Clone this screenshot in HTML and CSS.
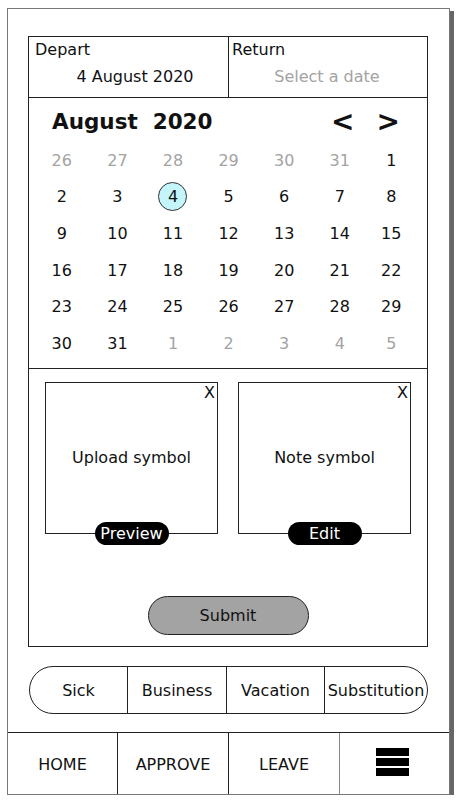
FILE: index.html
```html
<!DOCTYPE html>
<html lang="en">
<head>
    <meta charset="UTF-8">
    <meta name="viewport" content="width=device-width, initial-scale=1.0">
    <title>Leave request</title>
    <link rel="stylesheet" href="styles.css">
</head>
<body>
    <div class="frame">
        <div class="main">
            <div class="panel">
                <div class="dates">
                    <div class="date-cell">
                        <span class="date-label">Depart</span>
                        <span class="date-value">4 August 2020</span>
                    </div>
                    <div class="date-cell">
                        <span class="date-label">Return</span>
                        <span class="date-value placeholder">Select a date</span>
                    </div>
                </div>

                <div class="calendar">
                    <div class="cal-header">
                        <span class="cal-title">August&nbsp; 2020</span>
                        <div class="cal-arrows">
                            <span>&lt;</span>
                            <span>&gt;</span>
                        </div>
                    </div>
                    <div class="cal-grid">
                        <span class="muted">26</span><span class="muted">27</span><span class="muted">28</span><span class="muted">29</span><span class="muted">30</span><span class="muted">31</span><span>1</span>
                        <span>2</span><span>3</span><span><b class="selected">4</b></span><span>5</span><span>6</span><span>7</span><span>8</span>
                        <span>9</span><span>10</span><span>11</span><span>12</span><span>13</span><span>14</span><span>15</span>
                        <span>16</span><span>17</span><span>18</span><span>19</span><span>20</span><span>21</span><span>22</span>
                        <span>23</span><span>24</span><span>25</span><span>26</span><span>27</span><span>28</span><span>29</span>
                        <span>30</span><span>31</span><span class="muted">1</span><span class="muted">2</span><span class="muted">3</span><span class="muted">4</span><span class="muted">5</span>
                    </div>
                </div>

                <div class="attachments">
                    <div class="cards">
                        <div class="card">
                            <span class="close">X</span>
                            <span>Upload symbol</span>
                            <span class="pill">Preview</span>
                        </div>
                        <div class="card">
                            <span class="close">X</span>
                            <span>Note symbol</span>
                            <span class="pill">Edit</span>
                        </div>
                    </div>
                    <button class="submit">Submit</button>
                </div>
            </div>

            <div class="segments">
                <span>Sick</span>
                <span>Business</span>
                <span>Vacation</span>
                <span>Substitution</span>
            </div>
        </div>

        <nav class="bottom-nav">
            <span>HOME</span>
            <span>APPROVE</span>
            <span>LEAVE</span>
            <span class="menu">
                <i></i><i></i><i></i>
            </span>
        </nav>
    </div>
</body>
</html>
```

FILE: styles.css
```css
body {
    margin: 0;
    font-family: "DejaVu Sans", Verdana, sans-serif;
    font-size: 16px;
    color: #111;
    background: #fff;
}
.frame {
    margin: 8px 0 0 7px;
    width: 441px;
    height: 785px;
    border: 1px solid #777;
    box-shadow: 4px 3px 0 #666;
    display: flex;
    flex-direction: column;
}
.main {
    flex: 1;
    padding: 27px 21px 0 20px;
}
.panel {
    border: 1px solid #222;
    height: 609px;
    display: flex;
    flex-direction: column;
}
.dates {
    display: grid;
    grid-template-columns: 1fr 1fr;
    height: 60px;
    border-bottom: 1px solid #222;
}
.date-cell {
    display: flex;
    flex-direction: column;
    padding: 3px 7px 0 6px;
}
.date-cell + .date-cell {
    border-left: 1px solid #222;
    padding-left: 3px;
}
.date-label {
    line-height: 19px;
}
.date-value {
    margin-top: 8px;
    line-height: 19px;
    text-align: center;
    padding-left: 14px;
}
.date-value.placeholder {
    color: #a3a3a3;
    padding-left: 2px;
    padding-right: 0;
}
.calendar {
    border-bottom: 1px solid #222;
    padding-bottom: 6px;
}
.cal-header {
    height: 44px;
    display: flex;
    justify-content: space-between;
    align-items: center;
    padding: 3px 27px 0 23px;
    box-sizing: border-box;
}
.cal-title {
    font-size: 21.5px;
    font-weight: bold;
}
.cal-arrows {
    display: flex;
    gap: 22px;
    font-size: 28px;
    font-weight: bold;
}
.cal-grid {
    display: grid;
    grid-template-columns: repeat(6, 55.6px) 1fr;
    grid-auto-rows: 36.6px;
    padding: 0 12px 0 5px;
}
.cal-grid span {
    display: flex;
    justify-content: center;
    align-items: center;
}
.cal-grid .muted {
    color: #a3a3a3;
}
.selected {
    font-weight: normal;
    width: 27px;
    height: 27px;
    border: 1px solid #333;
    border-radius: 50%;
    background: #c4f5fb;
    display: flex;
    justify-content: center;
    align-items: center;
}
.attachments {
    flex: 1;
    display: flex;
    flex-direction: column;
    align-items: center;
    padding: 13px 16px 0;
}
.cards {
    align-self: stretch;
    display: grid;
    grid-template-columns: 1fr 1fr;
    gap: 20px;
}
.card {
    position: relative;
    height: 150px;
    border: 1px solid #222;
    display: flex;
    justify-content: center;
    align-items: center;
}
.close {
    position: absolute;
    top: 0;
    right: 2px;
    font-size: 16px;
    line-height: 19px;
}
.pill {
    position: absolute;
    left: 50%;
    bottom: -12px;
    transform: translateX(-50%);
    width: 74px;
    height: 23px;
    border-radius: 12px;
    background: #000;
    color: #fff;
    display: flex;
    justify-content: center;
    align-items: center;
}
.submit {
    margin-top: 62px;
    width: 161px;
    height: 39px;
    border: 1px solid #222;
    border-radius: 20px;
    background: #a3a3a3;
    font-family: inherit;
    font-size: 16px;
    color: #111;
    padding-top: 2px;
}
.segments {
    margin: 19px 0 0 1px;
    height: 46px;
    border: 1px solid #222;
    border-radius: 24px;
    display: grid;
    grid-template-columns: 97px 99px 98px 1fr;
}
.segments span {
    display: flex;
    justify-content: center;
    align-items: center;
    white-space: nowrap;
}
.segments span + span {
    border-left: 1px solid #222;
}
.bottom-nav {
    height: 61px;
    border-top: 1px solid #222;
    display: grid;
    grid-template-columns: 109px 111px 111px 1fr;
}
.bottom-nav span {
    display: flex;
    justify-content: center;
    align-items: center;
    padding-top: 2px;
}
.bottom-nav span + span {
    border-left: 1px solid #222;
}
.bottom-nav .menu {
    flex-direction: column;
    gap: 2px;
    padding: 0 4px 3px 0;
    border-left-color: #888;
}
.menu i {
    display: block;
    width: 33px;
    height: 8px;
    background: #000;
}
```
